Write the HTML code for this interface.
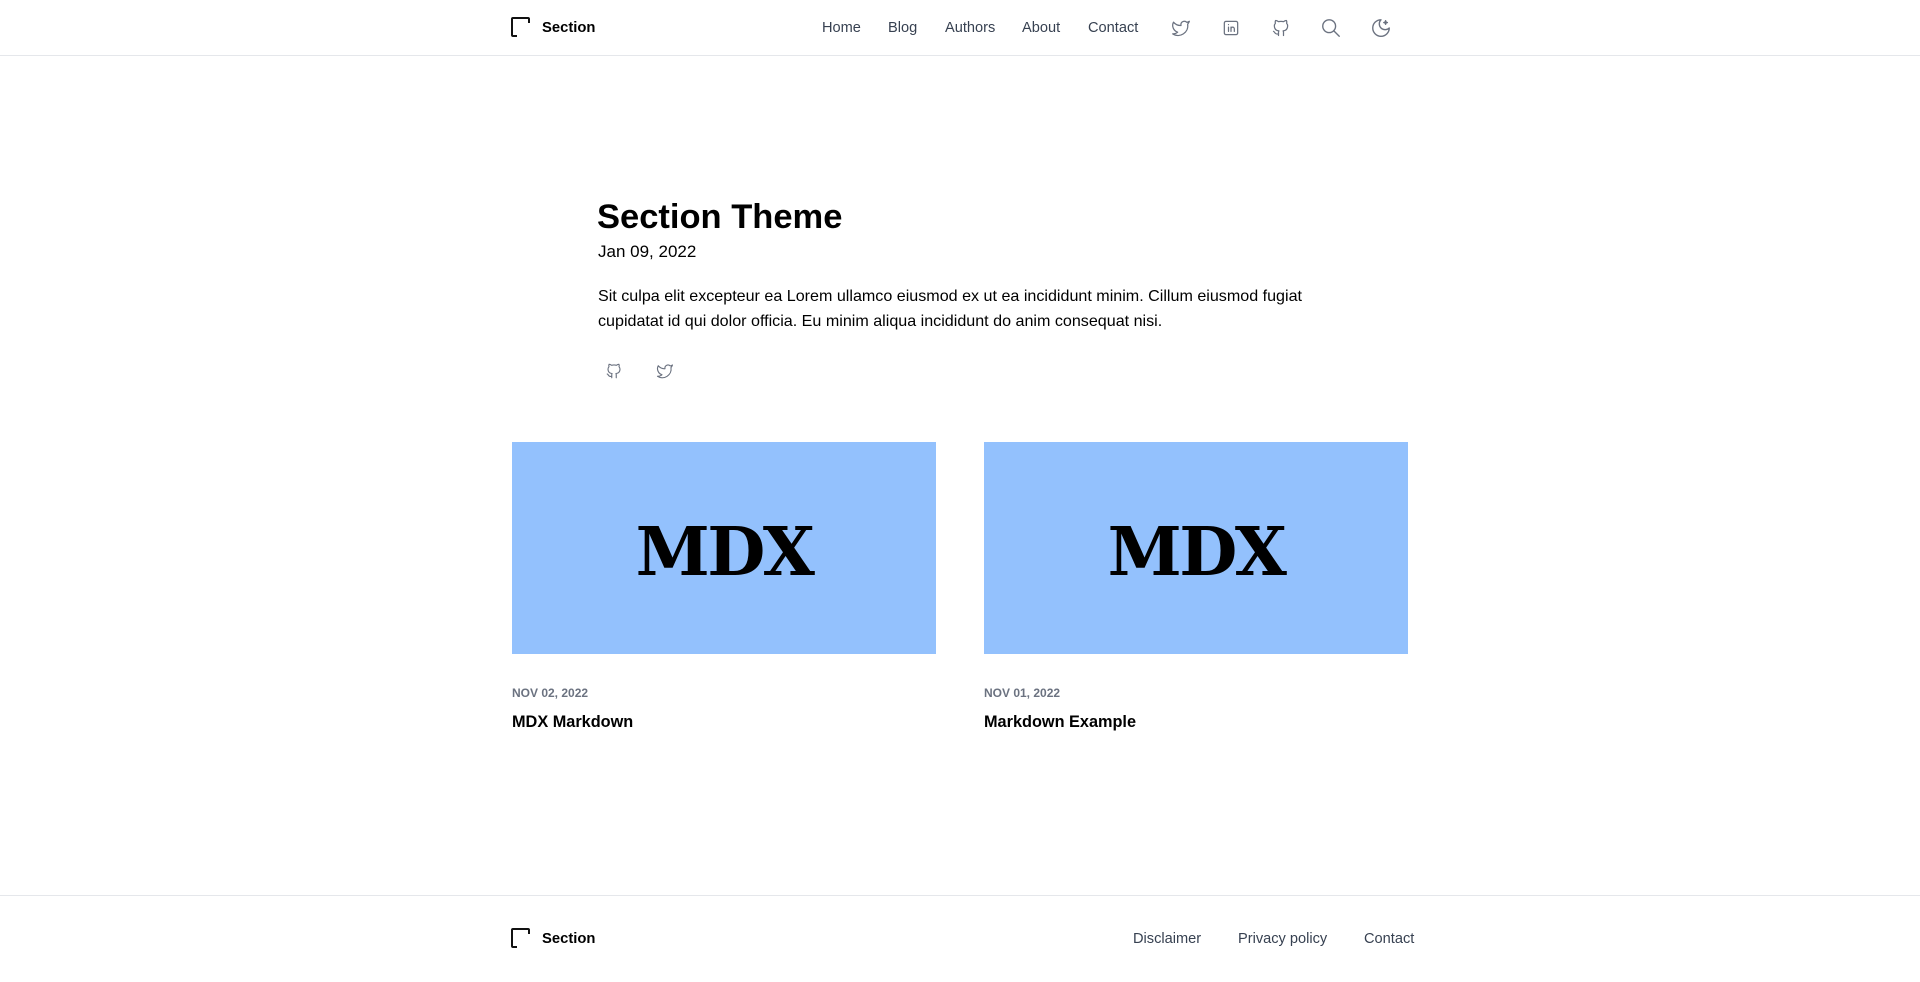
<!DOCTYPE html>
<html><head><meta charset="utf-8"><style>
*{margin:0;padding:0;box-sizing:border-box}
body{width:1920px;height:982px;background:#fff;font-family:"Liberation Sans",sans-serif;color:#000;position:relative;overflow:hidden}
.a{position:absolute;white-space:nowrap}
.hdr{position:absolute;left:0;top:0;width:1920px;height:56px;border-bottom:1px solid #e5e7eb}
.nav{font-size:14.6px;color:#374151}
.ic{position:absolute;width:20px;height:20px;fill:none;stroke:#6b7280;stroke-width:1.5;stroke-linecap:round;stroke-linejoin:round}
.card{position:absolute;top:442px;width:424px;height:212px;background:#93c1fd;display:flex;align-items:center;justify-content:center}
.mdx{font-family:"DejaVu Serif",serif;font-weight:bold;font-size:67px;letter-spacing:-2.5px;line-height:1;margin-top:6px}
.dt{font-size:12px;font-weight:bold;color:#6b7280}
.tt{font-size:16.3px;font-weight:bold}
</style></head><body>
<div class="hdr"></div>
<svg class="a" style="left:509px;top:16px" width="22" height="22" viewBox="0 0 22 22"><path d="M20 7V3a1 1 0 0 0-1-1H4a1 1 0 0 0-1 1v16a1 1 0 0 0 1 1h4" fill="none" stroke="#111" stroke-width="2" stroke-linejoin="round"/></svg>
<div class="a" style="left:542px;top:20px;font-size:14.8px;font-weight:bold">Section</div>
<div class="a nav" style="left:822px;top:20px">Home</div>
<div class="a nav" style="left:888px;top:20px">Blog</div>
<div class="a nav" style="left:945px;top:20px">Authors</div>
<div class="a nav" style="left:1022px;top:20px">About</div>
<div class="a nav" style="left:1088px;top:20px">Contact</div>
<svg class="ic" style="left:1171px;top:18px" viewBox="0 0 24 24"><path d="M22 4s-.7 2.1-2 3.4c1.6 10-9.4 17.3-18 11.6 2.2.1 4.4-.6 6-2C3 15.5.5 9.6 3 5c2.2 2.6 5.6 4.1 9 4-.9-4.2 4-6.6 7-3.8 1.1 0 3-1.2 3-1.2z"/></svg>
<svg class="ic" style="left:1221px;top:18px" viewBox="0 0 24 24"><rect x="4" y="4" width="16" height="16" rx="2"/><path d="M9 11v5M9 8v.01M12 16v-5M12 13a2 2 0 0 1 4 0v3"/></svg>
<svg class="ic" style="left:1271px;top:18px" viewBox="0 0 24 24"><path d="M9 19c-4.3 1.4-4.3-2.5-6-3m12 5v-3.5c0-1 .1-1.4-.5-2 2.8-.3 5.5-1.4 5.5-6a4.6 4.6 0 0 0-1.3-3.2 4.2 4.2 0 0 0-.1-3.2s-1.1-.3-3.5 1.3a12.3 12.3 0 0 0-6.2 0C6.5 2.8 5.4 3.1 5.4 3.1a4.2 4.2 0 0 0-.1 3.2A4.6 4.6 0 0 0 4 9.5c0 4.6 2.7 5.7 5.5 6-.6.6-.6 1.2-.5 2V21"/></svg>
<svg class="ic" style="left:1320px;top:17px;width:22px;height:22px" viewBox="0 0 24 24"><circle cx="10" cy="10" r="7"/><path d="M21 21l-6-6"/></svg>
<svg class="ic" style="left:1370px;top:17px;width:22px;height:22px" viewBox="0 0 24 24"><path d="M12 3a6 6 0 0 0 9 9 9 9 0 1 1-9-9z"/><path d="M17 4a2 2 0 0 0 2 2 2 2 0 0 0-2 2 2 2 0 0 0-2-2 2 2 0 0 0 2-2"/></svg>

<div class="a" style="left:597px;top:198px;font-size:34.5px;font-weight:bold">Section Theme</div>
<div class="a" style="left:598px;top:242px;font-size:17px">Jan 09, 2022</div>
<div class="a" style="left:598px;top:284px;font-size:16.1px;line-height:25px;white-space:normal;width:740px">Sit culpa elit excepteur ea Lorem ullamco eiusmod ex ut ea incididunt minim. Cillum eiusmod fugiat cupidatat id qui dolor officia. Eu minim aliqua incididunt do anim consequat nisi.</div>
<svg class="ic" style="left:605px;top:362px;width:18px;height:18px" viewBox="0 0 24 24"><path d="M9 19c-4.3 1.4-4.3-2.5-6-3m12 5v-3.5c0-1 .1-1.4-.5-2 2.8-.3 5.5-1.4 5.5-6a4.6 4.6 0 0 0-1.3-3.2 4.2 4.2 0 0 0-.1-3.2s-1.1-.3-3.5 1.3a12.3 12.3 0 0 0-6.2 0C6.5 2.8 5.4 3.1 5.4 3.1a4.2 4.2 0 0 0-.1 3.2A4.6 4.6 0 0 0 4 9.5c0 4.6 2.7 5.7 5.5 6-.6.6-.6 1.2-.5 2V21"/></svg>
<svg class="ic" style="left:656px;top:362px;width:18px;height:18px" viewBox="0 0 24 24"><path d="M22 4s-.7 2.1-2 3.4c1.6 10-9.4 17.3-18 11.6 2.2.1 4.4-.6 6-2C3 15.5.5 9.6 3 5c2.2 2.6 5.6 4.1 9 4-.9-4.2 4-6.6 7-3.8 1.1 0 3-1.2 3-1.2z"/></svg>

<div class="card" style="left:512px"><span class="mdx">MDX</span></div>
<div class="card" style="left:984px"><span class="mdx">MDX</span></div>
<div class="a dt" style="left:512px;top:686px">NOV 02, 2022</div>
<div class="a tt" style="left:512px;top:713px">MDX Markdown</div>
<div class="a dt" style="left:984px;top:686px">NOV 01, 2022</div>
<div class="a tt" style="left:984px;top:713px">Markdown Example</div>

<div class="a" style="left:0;top:895px;width:1920px;height:1px;background:#e5e7eb"></div>
<svg class="a" style="left:509px;top:927px" width="22" height="22" viewBox="0 0 22 22"><path d="M20 7V3a1 1 0 0 0-1-1H4a1 1 0 0 0-1 1v16a1 1 0 0 0 1 1h4" fill="none" stroke="#111" stroke-width="2" stroke-linejoin="round"/></svg>
<div class="a" style="left:542px;top:931px;font-size:14.8px;font-weight:bold">Section</div>
<div class="a nav" style="left:1133px;top:931px">Disclaimer</div>
<div class="a nav" style="left:1238px;top:931px">Privacy policy</div>
<div class="a nav" style="left:1364px;top:931px">Contact</div>
</body></html>
